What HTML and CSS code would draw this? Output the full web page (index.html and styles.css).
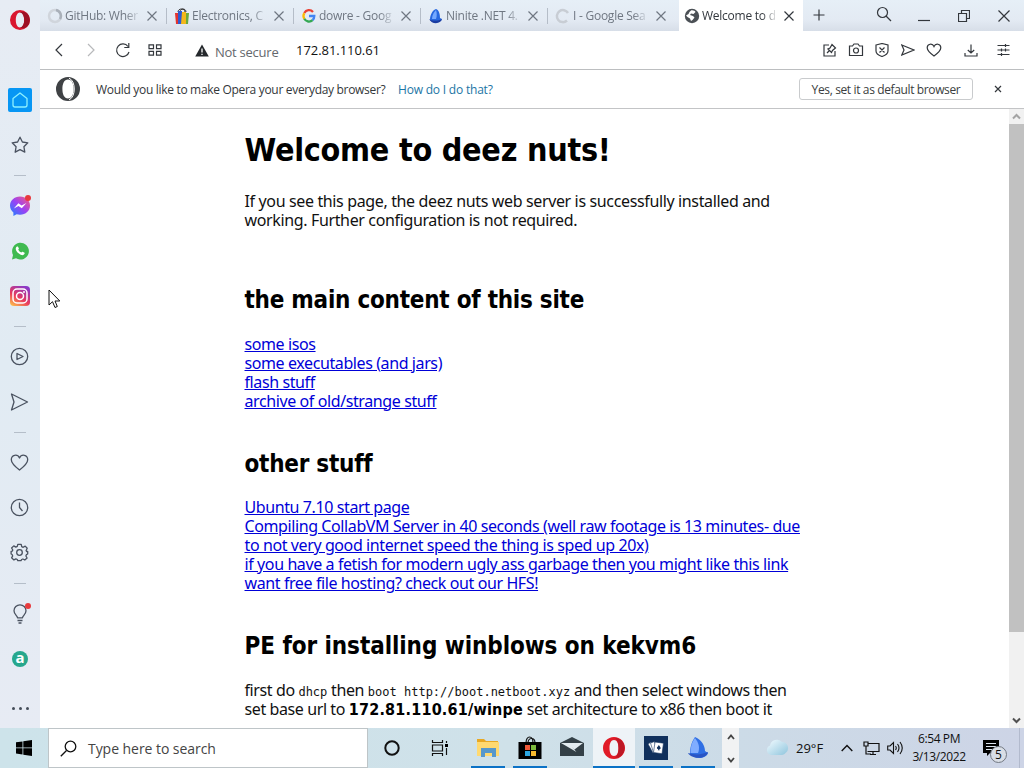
FILE: index.html
```html
<!DOCTYPE html>
<html lang="en">
<head>
    <meta charset="UTF-8">
    <meta name="viewport" content="width=device-width, initial-scale=1.0">
    <title>Welcome to deez nuts!</title>
    <link rel="stylesheet" href="styles.css">
</head>
<body>
    <div class="browser">
        <aside class="sidebar">
            <div class="opera-menu">
                <svg width="20" height="20" viewBox="0 0 20 20"><path fill="#d9162f" fill-rule="evenodd" d="M10 0a10 10 0 1 0 0 20a10 10 0 0 0 0-20zM10 2.500c2.600 0 4.200 3.200 4.200 7.500s-1.600 7.500-4.200 7.500s-4.200-3.200-4.200-7.500s1.600-7.500 4.200-7.500z"/><path fill="#9d1024" d="M10 2.200c6-2 9.800 2.500 9.800 7.800s-3.800 9.800-9.800 7.800c2.800-1 4.200-4 4.200-7.800s-1.400-6.800-4.200-7.800z"/></svg>
            </div>
            <div class="side-item"><span class="home"><svg width="24" height="24" viewBox="0 0 24 24"><path class="line" d="M5 10.500L12 5l7 5.500V17a2 2 0 0 1-2 2H7a2 2 0 0 1-2-2z"/></svg></span></div>
            <div class="side-item"><svg width="20" height="20" viewBox="0 0 20 20"><path class="line" d="M10 2.200l2.400 4.800 5.400.8-3.900 3.900.9 5.500-4.800-2.500-4.800 2.500.9-5.500-3.900-3.900 5.400-.8z"/></svg></div>
            <div class="side-sep"></div>
            <div class="side-item"><svg width="22" height="22" viewBox="0 0 22 22"><defs><linearGradient id="msg" x1="0" y1="1" x2="1" y2="0"><stop offset="0" stop-color="#1688ff"/><stop offset=".5" stop-color="#9a42f5"/><stop offset="1" stop-color="#ff5c78"/></linearGradient></defs><path fill="url(#msg)" d="M11 1.500c-5.700 0-10 4-10 9 0 3 1.300 5.300 3.400 7V21l3.200-1.700c1 .3 2.200.4 3.400.4 5.700 0 10-4 10-9.200s-4.300-9-10-9z"/><path fill="#fff" d="M4.800 13.500l4.600-5.200 3.200 2.200 4.800-2.500-4.600 5.300-3.300-2.200z"/></svg><i class="badge"></i></div>
            <div class="side-item"><svg width="18" height="18" viewBox="0 0 18 18"><path fill="#3fba50" d="M1 17.500l1-4.500A8.400 8.400 0 1 1 5 16.300z"/><path fill="#fff" d="M6 4.500c-2.500 1.500-.8 4.800 1.200 6.600 2 1.800 5.200 3.200 6.300.7.400-.8.200-1-.4-1.300l-1.500-.8c-.4-.2-.7 0-1.200.8-1.500-.5-2.500-1.500-3.200-3 .8-.6.8-.9.600-1.300L7 4.800c-.2-.4-.6-.5-1-.3z"/></svg></div>
            <div class="side-item"><svg width="22" height="22" viewBox="0 0 22 22"><defs><linearGradient id="ig" x1=".1" y1="1" x2=".7" y2="0"><stop offset="0" stop-color="#fdc04c"/><stop offset=".45" stop-color="#e93a5c"/><stop offset="1" stop-color="#8a3ac8"/></linearGradient></defs><rect x="1" y="1" width="20" height="20" rx="4" fill="url(#ig)"/><g fill="none" stroke="#fff" stroke-width="1.500"><rect x="4" y="4" width="14" height="14" rx="4"/><circle cx="11" cy="11" r="3.500"/></g><circle cx="15" cy="7" r="1" fill="#fff"/></svg></div>
            <div class="side-sep"></div>
            <div class="side-item"><svg width="20" height="20" viewBox="0 0 20 20"><circle class="line" cx="9.500" cy="9.500" r="8.200"/><path class="line" d="M7 6.500l6 3-6 3z"/></svg></div>
            <div class="side-item"><svg width="20" height="20" viewBox="0 0 20 20"><path class="line" d="M1.500 2l16 8-16 8 2.500-8z"/></svg></div>
            <div class="side-sep"></div>
            <div class="side-item"><svg width="20" height="20" viewBox="0 0 20 20"><path class="line" d="M9.500 17C5 13.500 1.300 10.300 1.300 6.700c0-5 6.200-6.200 8.200-1.700 2-4.500 8.200-3.300 8.200 1.700 0 3.600-3.700 6.800-8.200 10.300z"/></svg></div>
            <div class="side-item"><svg width="20" height="20" viewBox="0 0 20 20"><circle class="line" cx="9.500" cy="9.500" r="8.200"/><path class="line" d="M9.500 4.500v5l3 3.500"/></svg></div>
            <div class="side-item"><svg width="20" height="20" viewBox="0.500 0.500 20 20"><circle class="line" cx="10" cy="10" r="2.800"/><path class="line" d="M8.300 1.800h3.400l.5 2.300 1.500.7 2-1.200 2 2.200-1.100 2.200.5 1h1.100v2.500l-1.300.6-.5 1.400 1.200 2-2.300 2-1.900-1-1.300.5-.6 1.200H8.300l-.5-1.200-1.400-.6-2 1-2.300-2.100 1.100-1.900-.6-1.400-1-.5V8.900l1.200-.3.500-1.100-1.200-2 2.200-2.100 2 1.200 1.500-.7z"/></svg></div>
            <div class="side-sep"></div>
            <div class="side-item"><svg width="18" height="22" viewBox="0 0 18 22"><path class="line" d="M6.500 14.800c0-2-3.500-3.300-3.500-7a6 6 0 0 1 12 0c0 3.700-3.500 5-3.500 7zM6.500 17.500h5M7.500 20h3"/></svg><i class="badge"></i></div>
            <div class="side-item"><span class="amazon">a</span></div>
            <div class="side-item more"><i></i><i></i><i></i></div>
        </aside>

        <div class="window">
            <header class="tabs">
                <div class="tab">
                    <svg width="16" height="16" viewBox="0 0 16 16"><circle cx="8" cy="8" r="6" fill="none" stroke="#d0d5dc" stroke-width="2.500"/><path d="M9 2a6 6 0 0 1 4 9" fill="none" stroke="#a9b0b9" stroke-width="2.500"/></svg>
                    <span class="tab-title">GitHub: Wher</span>
                    <svg class="x" width="12" height="12" viewBox="0 0 12 12"><path d="M1.500 1.500l9 9M10.500 1.500l-9 9"/></svg>
                </div>
                <div class="tab">
                    <svg width="16" height="16" viewBox="0 0 16 16"><path d="M4 4c0-4 7-4 7 0M6 4c0-4 6-4 6 0" fill="none" stroke="#333"/><path fill="#e3342f" d="M1 5h4v11H2z"/><path fill="#2f5bd0" d="M4 3h4v13H4z"/><path fill="#f4b71b" d="M8 4h4v12H7z"/><path fill="#6caa3a" d="M12 5h3l-1 11h-2z"/></svg>
                    <span class="tab-title">Electronics, C</span>
                    <svg class="x" width="12" height="12" viewBox="0 0 12 12"><path d="M1.500 1.500l9 9M10.500 1.500l-9 9"/></svg>
                </div>
                <div class="tab">
                    <svg width="16" height="16" viewBox="0 0 16 16"><g fill="none" stroke-width="2.300"><path stroke="#ea4335" d="M3.300 5a5.300 5.300 0 0 1 8.700-1"/><path stroke="#fbbc05" d="M3.300 5.200a5.300 5.300 0 0 0 0 5.600"/><path stroke="#34a853" d="M3.300 10.800a5.300 5.300 0 0 0 8.300 1.300"/><path stroke="#4285f4" d="M8 8h5.300c0 1.900-.6 3.100-1.700 4.100"/></g></svg>
                    <span class="tab-title">dowre - Goog</span>
                    <svg class="x" width="12" height="12" viewBox="0 0 12 12"><path d="M1.500 1.500l9 9M10.500 1.500l-9 9"/></svg>
                </div>
                <div class="tab">
                    <svg width="16" height="16" viewBox="0 0 16 16"><path fill="#2868df" d="M2 12C2 6 5 2 8 1c3 1 4 5 4 9l2 1c-1 4-8 5-12 1z"/><path fill="#75a9ff" d="M4 11c0-4 2-7 4-9 1 3 1 6 0 9z"/><path fill="#1b3ca1" d="M1 11c3 2 9 2 13 0-1 5-10 6-13 0z"/></svg>
                    <span class="tab-title">Ninite .NET 4.</span>
                    <svg class="x" width="12" height="12" viewBox="0 0 12 12"><path d="M1.500 1.500l9 9M10.500 1.500l-9 9"/></svg>
                </div>
                <div class="tab last">
                    <svg width="16" height="16" viewBox="0 0 16 16"><path d="M13 5a6 6 0 1 0-1 7.500" fill="none" stroke="#c8cdd4" stroke-width="2.500"/></svg>
                    <span class="tab-title">I - Google Sea</span>
                    <svg class="x" width="12" height="12" viewBox="0 0 12 12"><path d="M1.500 1.500l9 9M10.500 1.500l-9 9"/></svg>
                </div>
                <div class="tab active">
                    <svg width="16" height="16" viewBox="0 0 16 16"><circle cx="8" cy="8" r="7.200" fill="#4b5055"/><path fill="#fff" d="M7 2.500c2-.5 4 .5 4.500 1.500L9.500 6 7 5.500 6 7l3 1 1.500 1.500L8.500 12 7 13l-1-2.500L3.500 9 2 7.500 4.500 6l1-2z"/></svg>
                    <span class="tab-title">Welcome to d</span>
                    <svg class="x" width="12" height="12" viewBox="0 0 12 12"><path d="M1.500 1.500l9 9M10.500 1.500l-9 9"/></svg>
                </div>
                <div class="new-tab"><svg width="12" height="12" viewBox="0 0 12 12"><path class="ctl" d="M6 .5v11M.5 6h11"/></svg></div>
                <div class="win-controls">
                    <span><svg width="16" height="16" viewBox="0 0 16 16"><circle class="ctl" cx="6.500" cy="6.500" r="5"/><path class="ctl" d="M10 10l5 5"/></svg></span>
                    <span><svg width="12" height="12" viewBox="0 0 12 12"><path class="ctl" d="M0 10.500h12"/></svg></span>
                    <span><svg width="12" height="12" viewBox="0 0 12 12"><path class="ctl" d="M.5 3.500h8v8h-8zM3.500 3.500v-3h8v8h-3"/></svg></span>
                    <span><svg width="12" height="12" viewBox="0 0 12 12"><path class="ctl" d="M.5.5l11 11M11.500.5l-11 11"/></svg></span>
                </div>
            </header>

            <nav class="toolbar">
                <div class="nav-buttons">
                    <span><svg width="16" height="16" viewBox="0 0 16 16"><path class="ctl" d="M11 2L5 8l6 6"/></svg></span>
                    <span class="disabled"><svg width="16" height="16" viewBox="0 0 16 16"><path class="ctl" d="M5 2l6 6-6 6"/></svg></span>
                    <span><svg width="16" height="16" viewBox="0 0 16 16"><path class="ctl" d="M13 4.500A6.300 6.300 0 1 0 14 10M13.800 1v4.500H9.300"/></svg></span>
                    <span><svg width="14" height="12" viewBox="0 0 14 12"><path class="ctl" d="M1 .8h4.500v3.900H1zM8.500.8H13v3.900H8.500zM1 7.300h4.500v3.900H1zM8.500 7.300H13v3.900H8.500z"/></svg></span>
                </div>
                <svg class="warn" width="14" height="13" viewBox="0 0 14 13"><path fill="#24282c" d="M7 .5L13.800 12.500H.2z"/><path stroke="#fff" stroke-width="1.300" d="M7 4.500v4M7 9.800v1.300"/></svg>
                <span class="insecure">Not secure</span>
                <span class="url">172.81.110.61</span>
                <div class="page-actions">
                    <span><svg width="14" height="14" viewBox="0 0 14 14"><path class="ctl" d="M6 2H1v11h11V8M4 10l2.500-2.500M5 6l3.500 3.500 1-2 3-2.500L9 1.500 7 5z"/></svg></span>
                    <span><svg width="16" height="14" viewBox="0 0 16 14"><path class="ctl" d="M1.500 3h3l1.500-2h4l1.500 2h3v9.500h-13z"/><circle class="ctl" cx="8" cy="7.500" r="2.500"/></svg></span>
                    <span><svg width="14" height="14" viewBox="0 0 14 14"><path class="ctl" d="M1 2l6-1.500L13 2v6c0 2.500-3 4.500-6 5.500C4 12.500 1 10.500 1 8zM4.500 4.500l5 5M9.500 4.500l-5 5"/></svg></span>
                    <span><svg width="14" height="12" viewBox="0 0 14 12"><path class="ctl" d="M.8 1L13 6 .8 11 3 6z"/></svg></span>
                    <span><svg width="16" height="14" viewBox="0 0 16 14"><path class="ctl" d="M8 13C4.500 10.500 1.200 7.800 1.200 4.800 1.200.6 6.500 0 8 3.500 9.500 0 14.800.6 14.800 4.800c0 3-3.300 5.700-6.800 8.200z"/></svg></span>
                </div>
                <div class="browser-actions">
                    <span><svg width="14" height="13" viewBox="0 0 14 13"><path class="ctl" d="M7 .5V9M3.800 6L7 9l3.200-3M1 9v3h12V9"/></svg></span>
                    <span><svg width="13" height="12" viewBox="0 0 13 12"><path class="ctl" d="M.5 1.500h12M.5 6h12M.5 10.500h12M8.500 0v3M4.500 4.500v3M8.500 4.500v3M4.500 9v3"/></svg></span>
                </div>
            </nav>

            <div class="infobar">
                <svg width="24" height="24" viewBox="0 0 24 24"><path fill="#3f4245" fill-rule="evenodd" d="M12 0a12 12 0 1 0 0 24a12 12 0 0 0 0-24zM12 2.600c3.800 0 5.600 4.200 5.600 9.400s-1.800 9.400-5.600 9.400S6.400 17.200 6.400 12s1.800-9.400 5.600-9.400z"/><path d="M13 1.200c7 2.500 7 19.100 0 21.600" fill="none" stroke="#fff"/></svg>
                <span class="info-text">Would you like to make Opera your everyday browser?</span>
                <a class="info-link" href="#">How do I do that?</a>
                <button class="default-button">Yes, set it as default browser</button>
                <svg class="info-close" width="8" height="8" viewBox="0 0 8 8"><path class="ctl" d="M1 1l6 6M7 1L1 7"/></svg>
            </div>

            <div class="viewport">
                <main class="page">
                    <h1>Welcome to deez nuts!</h1>
                    <p class="intro">If you see this page, the deez nuts web server is successfully installed and<br>working. Further configuration is not required.</p>

                    <h2>the main content of this site</h2>
                    <p>
                        <a href="#">some isos</a><br>
                        <a href="#">some executables (and jars)</a><br>
                        <a href="#">flash stuff</a><br>
                        <a href="#">archive of old/strange stuff</a>
                    </p>

                    <h2>other stuff</h2>
                    <p>
                        <a href="#">Ubuntu 7.10 start page</a><br>
                        <a href="#">Compiling CollabVM Server in 40 seconds (well raw footage is 13 minutes- due<br>to not very good internet speed the thing is sped up 20x)</a><br>
                        <a href="#">if you have a fetish for modern ugly ass garbage then you might like this link</a><br>
                        <a href="#">want free file hosting? check out our HFS!</a>
                    </p>

                    <h2 class="pe">PE for installing winblows on kekvm6</h2>
                    <p>first do <code>dhcp</code> then <code>boot http://boot.netboot.xyz</code> and then select windows then<br>set base url to <b>172.81.110.61/winpe</b> set architecture to x86 then boot it</p>
                </main>
                <div class="scrollbar">
                    <svg width="15" height="15" viewBox="0 0 15 15"><path d="M4 9.500L7.500 6 11 9.500" fill="none" stroke="#a3a3a3" stroke-width="2"/></svg>
                    <div class="thumb"></div>
                    <svg class="down" width="15" height="15" viewBox="0 0 15 15"><path d="M4 5.500L7.500 9 11 5.500" fill="none" stroke="#505050" stroke-width="2"/></svg>
                </div>
            </div>
        </div>
    </div>

    <footer class="taskbar">
        <div class="start"><svg width="16" height="16" viewBox="0 0 16 16"><path d="M0 2.300l6.500-.9v6.100H0zM7.300 1.200L16 0v7.500H7.300zM0 8.300h6.500v6.200L0 13.600zM7.300 8.300H16V16l-8.700-1.300z"/></svg></div>
        <div class="search">
            <svg width="17" height="17" viewBox="0 0 17 17"><circle cx="10.500" cy="6.500" r="5.300" fill="none" stroke="#111" stroke-width="1.300"/><path d="M6.500 10.500L.8 16.200" stroke="#111" stroke-width="1.300"/></svg>
            <span>Type here to search</span>
        </div>
        <div class="task wide"><svg width="16" height="16" viewBox="0 0 16 16"><circle cx="8" cy="8" r="6.700" fill="none" stroke="#111" stroke-width="2"/></svg></div>
        <div class="task wide"><svg width="18" height="16" viewBox="0 0 18 16"><path fill="none" stroke="#111" stroke-width="1.200" d="M1.500 0v2.500h10V0M1.500 5h10v6h-10zM1.500 16v-2.500h10V16M15.500 1v2M15.500 8v7"/><path d="M14 4h3v3h-3z"/></svg></div>
        <div class="apps">
            <div class="task open"><svg width="24" height="24" viewBox="0 0 24 24"><path fill="#e8a823" d="M1 3h7l2 2h12v5H1z"/><path fill="#ffd970" d="M1 6h22v14H1z"/><path fill="#5798cb" d="M5 12h15v9h-4v-4H9v4H5z"/></svg></div>
            <div class="task open"><svg width="24" height="24" viewBox="0 0 24 24"><path fill="none" stroke="#111" stroke-width="1.200" d="M8 7c0-8 7-8 7 0M10 7c0-6 7-6 7 0"/><path d="M.5 6h23v17H.5z"/><path fill="#ed5737" d="M7 9h5v5H7z"/><path fill="#7dba3d" d="M13 9h5v5h-5z"/><path fill="#2ca7e2" d="M7 15h5v5H7z"/><path fill="#f7b92d" d="M13 15h5v5h-5z"/></svg></div>
            <div class="task"><svg class="mail" width="24" height="20" viewBox="0 0 24 20"><path fill="#344047" d="M0 6l12-6 12 6v13H0z"/><path fill="#e3ebf0" d="M1 6h22l-8.500 6.500-2.500-2.500 4.500 5z"/></svg></div>
            <div class="task open current"><svg width="24" height="24" viewBox="0 0 24 24"><path fill="#e11b27" fill-rule="evenodd" d="M12 1C5.500 1 1 6 1 12s4.500 11 11 11 11-5 11-11S18.500 1 12 1zM12 4c3 0 4.500 3.500 4.500 8S15 20 12 20s-4.500-3.500-4.500-8S9 4 12 4z"/><path fill="#bd1825" d="M13 2c5 0 9.500 4 9.500 10S18 22 13 22c2.500-2 3.500-5 3.500-10S15.500 4 13 2z"/></svg></div>
            <div class="task open"><svg width="24" height="24" viewBox="0 0 24 24"><path fill="#10305c" d="M0 0h24v24H0z"/><g fill="#fff" stroke="#10305c" stroke-width=".6"><path d="M4 8l3-2 5 9-3 2z"/><path d="M6.500 7l4-1.500 3 10-4 1z"/><path d="M11 6l8.500 1.200-1.500 10.500-8.500-1.200z"/></g><path fill="#10305c" d="M14.800 9c1 1.800 2.200 2.200 1.800 3.500-.4.900-1.300.5-1.300.5l.4 1.300h-1.900l.6-1.400s-1.300.4-1.500-.9c0-1 1.300-1.300 1.900-3z"/></svg></div>
            <div class="task open"><svg width="24" height="24" viewBox="0 0 24 24"><path fill="#2f6fe4" d="M4 18C4 9 7 4 9 1c7 3 10 9 10 14l3 2c-2 6-13 7-18 1z"/><path fill="#80adff" d="M4.500 17c0-7 2-12 4.500-15 4 5 5 10 3 15z"/><path fill="#2a55c4" d="M2 17c6 2 13 2 20-1-1 7-16 8-20 1z"/></svg></div>
        </div>
        <div class="task-scroll">
            <svg width="8" height="6" viewBox="0 0 8 6"><path d="M1 5l3-3.500L7 5" fill="none" stroke="#444" stroke-width="1.800"/></svg>
            <svg width="8" height="6" viewBox="0 0 8 6"><path d="M1 1l3 3.500L7 1" fill="none" stroke="#444" stroke-width="1.800"/></svg>
        </div>
        <div class="tray">
            <svg width="24" height="18" viewBox="0 0 24 18"><defs><linearGradient id="cl" x2="1" y2="1"><stop offset="0" stop-color="#f2fbff"/><stop offset="1" stop-color="#8fc5dd"/></linearGradient></defs><path fill="url(#cl)" d="M6 16a5 5 0 0 1-1-9.500A7 7 0 0 1 17 3a6 6 0 0 1 4 10.500C19 16 17 16 15 16z"/></svg>
            <span class="temp">29°F</span>
            <svg width="12" height="8" viewBox="0 0 12 8"><path d="M.7 7L6 1.500 11.300 7" fill="none" stroke="#111" stroke-width="1.400"/></svg>
            <svg class="net" width="17" height="15" viewBox="0 0 17 15"><path d="M5 2.500h11v8H4.500M1 1h4v4H1zM3 5v8h5M10 10v3.500M7 13.500h6" fill="none" stroke="#111" stroke-width="1.200"/></svg>
            <svg class="vol" width="17" height="14" viewBox="0 0 17 14"><path d="M.7 5H3l3.500-3.500v11L3 9H.7zM8.500 5q1.500 2 0 4M10.500 3q3 4 0 8M13 1q4.500 6 0 12" fill="none" stroke="#111" stroke-width="1.100"/></svg>
            <div class="clock"><span>6:54 PM</span><span>3/13/2022</span></div>
            <div class="notify"><svg width="16" height="16" viewBox="0 0 16 16"><path d="M0 0h16v13H7l-3 3v-3H0z"/><path d="M3 3.500h10M3 6.500h10M3 9.500h6" stroke="#dce4ee"/></svg><span>5</span></div>
        </div>
    </footer>

    <svg class="cursor" width="13" height="20" viewBox="0 0 13 20"><path fill="#fff" stroke="#111" d="M1 1v15l3.500-3.300L7 18.500l2.300-1L7 12h4.800z"/></svg>
</body>
</html>
```
FILE: styles.css
```css
* {
    box-sizing: border-box;
}
body {
    margin: 0;
    width: 1024px;
    height: 768px;
    overflow: hidden;
    position: relative;
    background: #fff;
    font-family: "Open Sans", "Noto Sans", sans-serif;
    white-space: nowrap;
}
svg {
    display: block;
    flex: none;
}
.browser {
    display: flex;
    height: 728px;
}

/* sidebar */
.sidebar {
    width: 40px;
    flex: none;
    overflow: hidden;
    background: linear-gradient(#e7ecf4, #e1ebf3 50%, #e7ebf4);
}
.opera-menu {
    height: 77px;
    padding: 10px;
}
.side-item {
    height: 45px;
    display: flex;
    align-items: center;
    justify-content: center;
    position: relative;
}
.line {
    fill: none;
    stroke: #4a5260;
    stroke-width: 1.3;
    stroke-linejoin: round;
}
.home {
    background: #0796f4;
    border-radius: 2px;
}
.home .line {
    stroke: #8cf0ff;
}
.side-sep {
    height: 16px;
    padding: 8px 14px 7px;
}
.side-sep::before {
    content: "";
    display: block;
    height: 1px;
    background: #b5bec9;
}
.badge {
    position: absolute;
    width: 6px;
    height: 6px;
    border-radius: 50%;
    background: #e73a3d;
    right: 9px;
    top: 12px;
}
.amazon {
    width: 16px;
    height: 16px;
    border-radius: 50%;
    background: #26a78d;
    color: #fff;
    font-size: 15px;
    font-weight: bold;
    line-height: 13px;
    text-align: center;
}
.more {
    height: 54px;
    gap: 4px;
}
.more i {
    width: 3px;
    height: 3px;
    border-radius: 50%;
    background: #444c58;
}

/* tabs */
.window {
    flex: 1;
    min-width: 0;
    display: flex;
    flex-direction: column;
}
.tabs {
    height: 31px;
    flex: none;
    display: flex;
    background: linear-gradient(#e6eff7, #e3eaf3 65%, #d7dee8);
}
.tab {
    width: 127px;
    height: 31px;
    flex: none;
    display: flex;
    align-items: center;
    padding: 0 9px 0 7px;
    color: #6f7782;
    font-size: 12px;
    letter-spacing: -0.25px;
    background: linear-gradient(#b5bdc8, #b5bdc8) right 8px / 1px 16px no-repeat;
}
.tab.last {
    width: 131px;
    padding-right: 12px;
    background: none;
}
.tab-title {
    flex: 1;
    min-width: 0;
    margin-left: 2px;
    margin-right: 8px;
    overflow: hidden;
    -webkit-mask-image: linear-gradient(to right, #000 60px, transparent 76px);
    mask-image: linear-gradient(to right, #000 60px, transparent 76px);
}
.tab.active {
    width: 124px;
    background: #fff;
    color: #33383e;
    padding: 0 8px 0 5px;
}
.x path {
    stroke: #6f7782;
    stroke-width: 1.2;
}
.active .x path {
    stroke: #33383e;
}
.ctl {
    fill: none;
    stroke: #33373c;
    stroke-width: 1.2;
}
.new-tab {
    width: 31px;
    display: flex;
    align-items: center;
    justify-content: center;
    padding-bottom: 2px;
}
.win-controls {
    margin-left: auto;
    display: flex;
}
.win-controls span {
    width: 40px;
    display: flex;
    align-items: center;
    justify-content: center;
}
.win-controls span:first-child {
    padding-bottom: 3px;
}

/* address bar */
.toolbar {
    height: 39px;
    flex: none;
    display: flex;
    align-items: center;
    border-bottom: 1px solid #bcbec0;
    padding-left: 3px;
}
.nav-buttons, .page-actions, .browser-actions {
    display: flex;
}
.nav-buttons span, .page-actions span, .browser-actions span {
    height: 16px;
    display: flex;
    align-items: center;
    justify-content: center;
}
.nav-buttons span {
    width: 32px;
}
.page-actions span {
    width: 26px;
}
.browser-actions span {
    width: 33px;
}
.disabled {
    opacity: 0.35;
}
.warn {
    margin-left: 24px;
}
.insecure {
    margin: 3px 0 0 6px;
    width: 81px;
    font-size: 13px;
    color: #64686d;
    letter-spacing: -0.25px;
}
.url {
    font-size: 13px;
    color: #111;
    letter-spacing: -0.05px;
}
.page-actions {
    margin-left: auto;
}
.browser-actions {
    margin-left: 7px;
    padding-right: 4px;
}

/* default browser prompt */
.infobar {
    height: 39px;
    flex: none;
    display: flex;
    align-items: center;
    border-bottom: 1px solid #c3c4c6;
    padding-left: 16px;
    font-size: 12px;
    color: #33373a;
}
.info-text {
    margin-left: 16px;
    width: 302px;
    letter-spacing: -0.31px;
}
.info-link {
    color: #1c75a5;
    text-decoration: none;
    letter-spacing: -0.2px;
}
.default-button {
    margin-left: auto;
    width: 174px;
    height: 22px;
    padding: 0;
    border: 1px solid #c9cbcd;
    border-radius: 3px;
    background: #fff;
    color: #3a3d40;
    font: 12px "Open Sans", sans-serif;
    letter-spacing: -0.37px;
}
.info-close {
    margin: 0 22px 0 21px;
}

/* page */
.viewport {
    flex: 1;
    min-height: 0;
    display: flex;
    overflow: hidden;
}
.page {
    width: 560px;
    margin: 0 auto;
    padding: 22px 0 0;
    font-family: "Noto Sans", sans-serif;
    font-size: 16px;
    line-height: 19px;
    color: #111;
    letter-spacing: -0.4px;
}
h1, h2, .page b {
    font-family: "DejaVu Sans Condensed", "DejaVu Sans", sans-serif;
    font-stretch: condensed;
    color: #000;
}
h1 {
    margin: 0 0 22px;
    font-size: 32px;
    line-height: 39px;
    letter-spacing: -0.25px;
}
h2 {
    margin: 0 0 19.5px;
    font-size: 24px;
    line-height: 29px;
    letter-spacing: -0.25px;
}
.pe {
    letter-spacing: -0.07px;
}
.page p {
    margin: 0 0 39px;
}
.page .intro {
    margin-bottom: 56px;
    letter-spacing: -0.36px;
}
.page a {
    color: #0000d8;
}
.page b {
    letter-spacing: 0.2px;
}
.page code {
    font-family: "DejaVu Sans Mono", monospace;
    font-size: 12px;
    line-height: 1;
    letter-spacing: 0;
}
.page code, .page b {
    line-height: 0;
}
.scrollbar {
    width: 15px;
    flex: none;
    display: flex;
    flex-direction: column;
    background: #f1f1f1;
}
.thumb {
    height: 508px;
    background: #c1c1c1;
}
.down {
    margin-top: auto;
}

/* taskbar */
.taskbar {
    height: 40px;
    display: flex;
    background: linear-gradient(to right, #cde3ea, #cfe1e9 50%, #ccdbe7 72%, #cdd4e6);
}
.start {
    width: 48px;
    display: flex;
    align-items: center;
    justify-content: center;
}
.search {
    width: 320px;
    background: #fff;
    border: 1px solid #bec5c8;
    display: flex;
    align-items: center;
    gap: 11px;
    padding-left: 11px;
    font-size: 14px;
    letter-spacing: -0.05px;
    color: #444;
}
.task {
    width: 42px;
    display: flex;
    align-items: center;
    justify-content: center;
}
.task.wide {
    width: 48px;
}
.apps {
    display: flex;
    margin-left: 3px;
}
.task.open {
    background: linear-gradient(#0b72c6, #0b72c6) center bottom / 34px 2px no-repeat;
}
.task.current {
    background: linear-gradient(#0b72c6, #0b72c6) center bottom / 42px 2px no-repeat, #eef3f7;
}
.mail {
    margin-bottom: 3px;
}
.task-scroll {
    width: 17px;
    margin-left: 3px;
    background: #f1f2f3;
    display: flex;
    flex-direction: column;
    justify-content: space-between;
    align-items: center;
    padding: 6px 0 5px;
}
.tray {
    flex: 1;
    display: flex;
    align-items: center;
    padding-left: 26px;
    font-size: 12px;
    color: #111;
    border-right: 1px solid #b2bacd;
    margin-right: 4px;
}
.temp {
    margin-left: 7px;
    width: 45px;
    font-size: 13px;
}
.net {
    margin-left: 10px;
}
.vol {
    margin-left: 7px;
}
.clock {
    width: 70px;
    display: flex;
    flex-direction: column;
    align-items: center;
    line-height: 18px;
    letter-spacing: -0.4px;
}
.notify {
    position: relative;
    margin-left: 9px;
}
.notify span {
    position: absolute;
    left: 7px;
    top: 6px;
    width: 17px;
    height: 17px;
    border: 1px solid #737983;
    border-radius: 50%;
    background: #d9dee6;
    font-size: 12px;
    line-height: 15px;
    text-align: center;
}
.cursor {
    position: absolute;
    left: 48px;
    top: 289px;
}
```
